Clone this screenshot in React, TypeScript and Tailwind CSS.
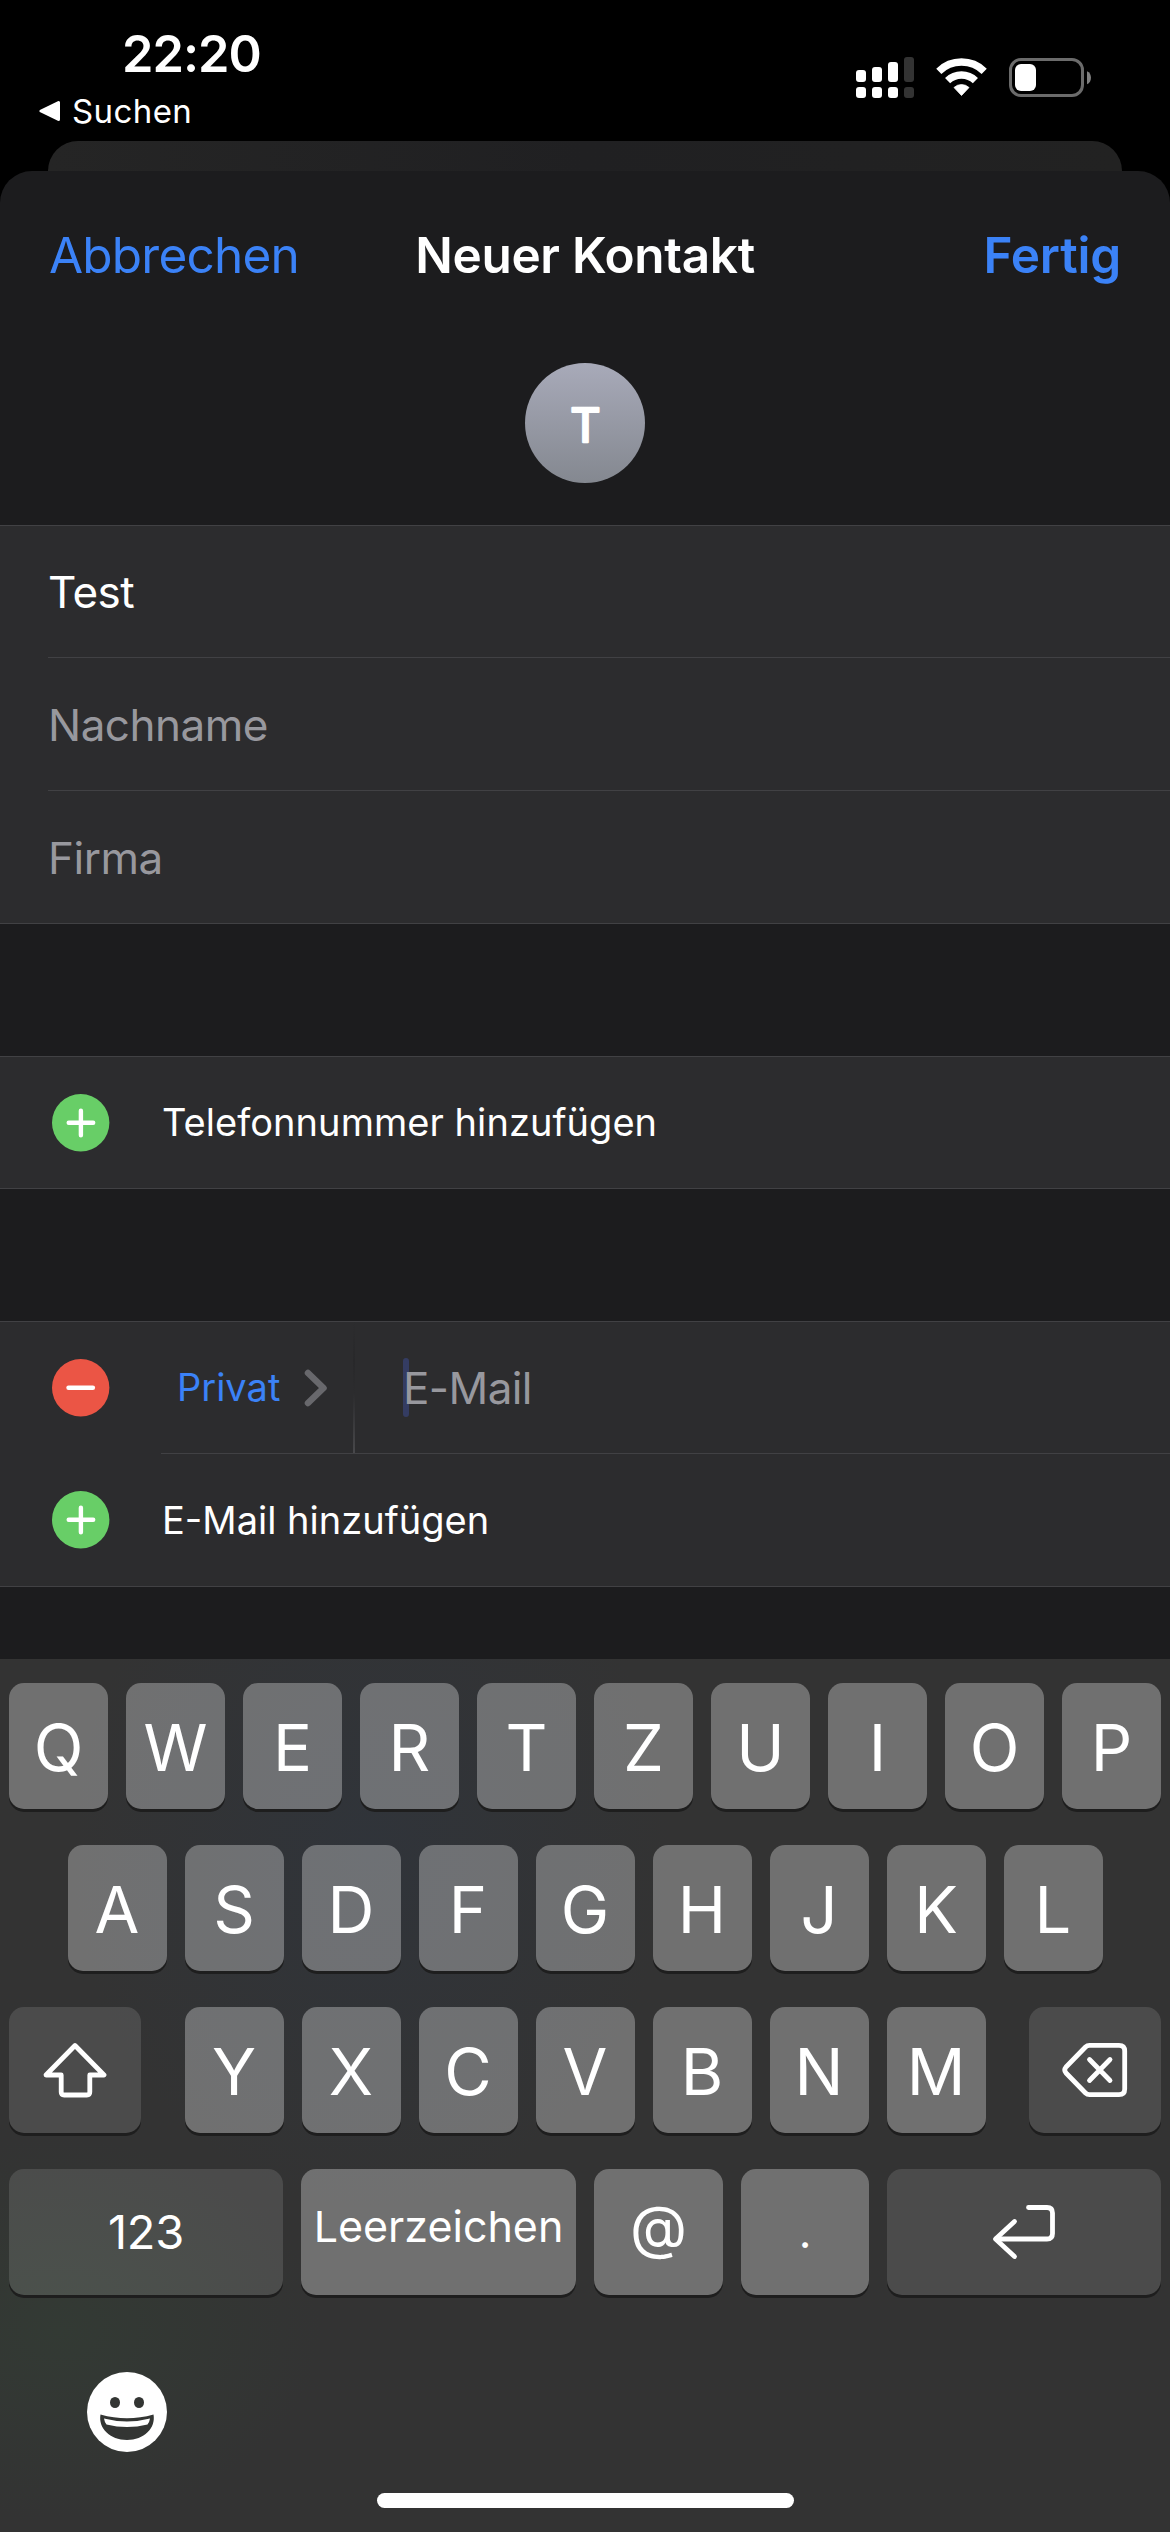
import type { ReactNode } from "react";
import clsx from "clsx";

function StatusBar() {
    return (
        <div className="flex h-[141px] justify-between pl-[39px] pr-[78px]">
            <div className="flex flex-col">
                <span className="mt-[24px] pl-[83px] text-[50.500px] leading-[60px] font-semibold tracking-[-1px]">22:20</span>
                <div className="mt-[7px] flex h-10 items-center gap-[11px]">
                    <svg width="22" height="22" viewBox="0 0 22 22" fill="white" stroke="white" strokeWidth="3" strokeLinejoin="round">
                        <path d="M2 11 19.5 2.5V19.5Z" />
                    </svg>
                    <span className="text-[33px] leading-10 tracking-[0.4px]">Suchen</span>
                </div>
            </div>

            <div className="mt-[57px] flex h-[41px] items-start">
                <svg width="58" height="41" viewBox="0 0 58 41" fill="white">
                    <rect x="0" y="13" width="10" height="12" rx="3" />
                    <rect x="16" y="10" width="10" height="15" rx="3" />
                    <rect x="32" y="5" width="10" height="20" rx="3" />
                    <rect x="48" y="0" width="10" height="25" rx="3" fill="#333333" />
                    <rect x="0" y="30" width="10" height="11" rx="3" />
                    <rect x="16" y="30" width="10" height="11" rx="3" />
                    <rect x="32" y="30" width="10" height="11" rx="3" />
                    <rect x="48" y="30" width="10" height="11" rx="3" fill="#333333" />
                </svg>
                <svg className="ml-[22px]" width="51" height="41" viewBox="0 0 51 41" fill="none" stroke="white" strokeWidth="7.4">
                    <path d="M2.8 14.3A32.5 32.5 0 0 1 48.2 14.3" />
                    <path d="M11.6 23.6A20 20 0 0 1 39.4 23.6" />
                    <path d="M18 30.5A11 11 0 0 1 33 30.5L25.5 38.5Z" fill="white" stroke="white" strokeWidth="0.8" strokeLinejoin="round" />
                </svg>
                <svg className="ml-[22px]" width="83" height="41" viewBox="0 0 83 41">
                    <rect x="1.5" y="2.5" width="72" height="36" rx="10.5" fill="none" stroke="#6b6b6b" strokeWidth="3" />
                    <rect x="6" y="7" width="21" height="27" rx="6" fill="white" />
                    <path d="M78 14.2C83.3 16 83.3 25.5 78 27.3Z" fill="#808080" />
                </svg>
            </div>
        </div>
    );
}

function RoundIcon({ minus }: { minus?: boolean }) {
    return (
        <svg className="shrink-0" width="58" height="58" viewBox="0 0 58 58">
            <circle cx="28.7" cy="28.7" r="28.7" fill={minus ? "#eb5545" : "#68ce67"} />
            <path
                d={minus ? "M16.5 28.7H40.9" : "M16.7 28.7H41.2M28.9 16.7V41.2"}
                stroke="white"
                strokeWidth="4.4"
                strokeLinecap="round"
            />
        </svg>
    );
}

function Section({ children }: { children: ReactNode }) {
    return <section className="border-y border-[#414144] bg-[#2c2c2e]">{children}</section>;
}

function Field({ children, filled }: { children: ReactNode; filled?: boolean }) {
    return (
        <div
            className={clsx(
                "flex h-[132px] items-center pt-[2px] pl-[48px] text-[44px] tracking-[-0.5px]",
                filled ? "text-white" : "text-[#98989e]"
            )}
        >
            {children}
        </div>
    );
}

function Key({ children, className, dark }: { children: ReactNode; className?: string; dark?: boolean }) {
    return (
        <div
            className={clsx(
                "flex h-[126px] items-center justify-center rounded-[15px] shadow-[0_3px_0_#1e1e1e]",
                dark ? "bg-white/12" : "bg-white/30",
                className ?? "w-[99px] pt-[4px] text-[65px]"
            )}
        >
            {children}
        </div>
    );
}

function Letters({ keys }: { keys: string }) {
    return (
        <div className="flex gap-[18px]">
            {keys.split("").map((k) => (
                <Key key={k}>{k}</Key>
            ))}
        </div>
    );
}

function Keyboard() {
    return (
        <div className="flex h-[873px] flex-col items-center bg-[#333333] bg-[radial-gradient(ellipse_300px_360px_at_370px_190px,#30343a_0%,transparent_100%),radial-gradient(ellipse_260px_190px_at_60px_670px,#333a34_0%,transparent_100%)] px-[9px] pt-6">
            <div className="flex w-full flex-col items-center gap-9">
                <Letters keys="QWERTZUIOP" />
                <Letters keys="ASDFGHJKL" />
                <div className="flex w-full justify-between">
                    <Key dark className="w-[132px]">
                        <svg width="64" height="56" viewBox="0 0 64 56" fill="none" stroke="white" strokeWidth="4.8" strokeLinejoin="round">
                            <path d="M32 3.5 61 33H46.8V50Q46.8 53 43.8 53H21.2Q18.2 53 18.2 50V33H3Z" />
                        </svg>
                    </Key>
                    <Letters keys="YXCVBNM" />
                    <Key dark className="w-[132px]">
                        <svg className="ml-[-1px]" width="66" height="56" viewBox="0 0 66 56" fill="none" stroke="white" strokeWidth="4.8" strokeLinecap="round" strokeLinejoin="round">
                            <path d="M27.5 3.3H57Q62.7 3.3 62.7 9V47Q62.7 52.7 57 52.7H27.5Q25.2 52.7 23.5 51L4 31Q1.5 28 4 25L23.5 5Q25.2 3.3 27.5 3.3Z" />
                            <path d="M27.5 17.5 48 38.5M48 17.5 27.5 38.5" />
                        </svg>
                    </Key>
                </div>
                <div className="flex w-full gap-[18px]">
                    <Key dark className="w-[274px] text-[47px] tracking-[-0.3px]">123</Key>
                    <Key className="w-[275px] pb-3 text-[43px]">Leerzeichen</Key>
                    <Key className="w-[129px] pb-2.5 text-[59px]">@</Key>
                    <Key className="w-[128px] text-[44px]">.</Key>
                    <Key dark className="w-[274px]">
                        <svg width="64" height="56" viewBox="0 0 64 56" fill="none" stroke="white" strokeWidth="4.8" strokeLinecap="round" strokeLinejoin="round">
                            <path d="M36.5 3.5H55Q60.5 3.5 60.5 9V29.5Q60.5 35 55 35H4" />
                            <path d="M22.5 17.5 3.5 35 22.5 52.5" />
                        </svg>
                    </Key>
                </div>
            </div>

            <svg className="mt-[77px] ml-[78px] self-start" width="80" height="80" viewBox="0 0 80 80">
                <circle cx="40" cy="40" r="40" fill="white" />
                <ellipse cx="28" cy="30.5" rx="5" ry="5.6" fill="#333533" />
                <ellipse cx="52" cy="30.5" rx="5" ry="5.6" fill="#333533" />
                <path d="M13.5 42.5Q40 50 66.5 42.5C69 56 57 68 40 68C23 68 11 56 13.5 42.5Z" fill="#333533" />
                <path d="M17 46.5Q40 52.5 63 46.5Q62.5 50 60.5 52.5Q40 57.5 19.5 52.5Q17.5 50 17 46.5Z" fill="white" />
            </svg>
            <div className="mt-[41px] h-[15px] w-[417px] rounded-full bg-white" />
        </div>
    );
}

export default function App() {
    return (
        <div className="h-[2532px] w-[1170px] overflow-hidden bg-black font-['Inter',sans-serif] text-white">
            <StatusBar />
            <div className="mx-[48px] h-[30px] rounded-t-[30px] bg-[linear-gradient(90deg,#252525,#202022_50%,#222222)]" />

            <main className="bg-black">
                <div className="h-[1488px] rounded-t-[32px] bg-[#1c1c1e]">
                    <header className="grid h-[168px] grid-cols-[1fr_auto_1fr] items-center px-[49px] text-[49.500px]">
                        <span className="tracking-[-0.8px] text-[#3b82f7]">Abbrechen</span>
                        <span className="font-semibold tracking-[-0.3px]">Neuer Kontakt</span>
                        <span className="text-right font-semibold tracking-[-0.2px] text-[#3b82f7]">Fertig</span>
                    </header>
                    <div className="flex h-[186px] justify-center pt-6">
                        <div className="h-[120px] w-[120px] rounded-full bg-linear-to-b from-[#a8aab9] to-[#848890]">
                            {/* outlined text keeps the initial's corners round */}
                            <svg width="120" height="120" viewBox="0 0 120 120">
                                <text x="60.500" y="78.500" textAnchor="middle" fontSize="47" fill="white" stroke="white" strokeWidth="2.400" strokeLinejoin="round">
                                    T
                                </text>
                            </svg>
                        </div>
                    </div>

                    <Section>
                        <div className="-mt-px">
                            <Field filled>Test</Field>
                        </div>
                        <div className="ml-12 h-px bg-[#414144]" />
                        <Field>Nachname</Field>
                        <div className="ml-12 h-px bg-[#414144]" />
                        <Field>Firma</Field>
                    </Section>

                    <div className="h-[132px]" />
                    <Section>
                        <div className="flex h-[131px] items-center gap-[52px] pl-[52px] text-[38px] tracking-[0.05px]">
                            <RoundIcon />
                            <span>Telefonnummer hinzufügen</span>
                        </div>
                    </Section>

                    <div className="h-[132px]" />
                    <Section>
                        <div className="flex h-[131px] items-center pl-[52px]">
                            <RoundIcon minus />
                            <span className="ml-[67px] w-[103px] text-[38px] text-[#3b82f7]">Privat</span>
                            <svg className="ml-[23px]" width="24" height="38" viewBox="0 0 24 38" fill="none" stroke="#68686c" strokeWidth="6.5" strokeLinecap="round" strokeLinejoin="round">
                                <path d="M5 4 20.5 19 5 34" />
                            </svg>
                            <div className="ml-[26px] h-full w-[2px] bg-[linear-gradient(#2c2c2e,#28282a_30%,#2c2c2e_55%,#48484b)]" />
                            <div className="ml-[48px] h-[59px] w-[6px] rounded-[3px] bg-[#343c62]" />
                            <span className="-ml-[6px] text-[44px] tracking-[-0.6px] text-[#98989e]">E-Mail</span>
                        </div>
                        <div className="ml-[161px] h-px bg-[#414144]" />
                        <div className="flex h-[132px] items-center gap-[52px] pl-[52px] text-[38px]">
                            <RoundIcon />
                            <span>E-Mail hinzufügen</span>
                        </div>
                    </Section>
                </div>
            </main>

            <Keyboard />
        </div>
    );
}
